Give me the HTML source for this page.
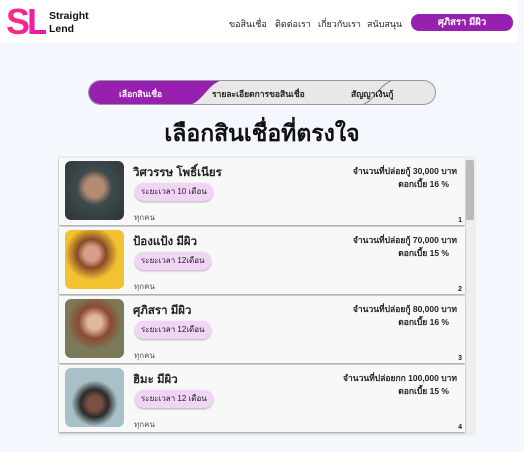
<!DOCTYPE html>
<html><head><meta charset="utf-8"><style>
*{margin:0;padding:0;box-sizing:border-box}
body{width:524px;height:452px;overflow:hidden;background:#f4f7fd;font-family:"Liberation Sans","DejaVu Sans",sans-serif;color:#222;position:relative}
.hdr{position:absolute;left:0;top:0;width:518px;height:43px;background:#fff}
.logo{position:absolute;left:6px;top:2px;font-size:36px;font-weight:bold;letter-spacing:-3px;background:linear-gradient(90deg,#ff2d7a,#e01bb0);-webkit-background-clip:text;color:transparent;line-height:40px}
.brand{position:absolute;left:49px;top:10px;font-size:10.5px;font-weight:bold;line-height:13px;color:#111}
.nav{position:absolute;top:17px;font-size:9px;color:#222;white-space:nowrap}
.btn{position:absolute;left:411px;top:14px;width:102px;height:17px;border-radius:8px;background:#9720b0;color:#fff;font-size:9.5px;text-align:center;line-height:17px;font-weight:bold}
.step{position:absolute;left:88px;top:80px;width:348px;height:25px;border:1px solid #999;border-radius:13px;background:#e8e8e8;overflow:hidden}
.step svg{position:absolute;left:0;top:0}
.st{position:absolute;top:6px;font-size:8.5px;font-weight:bold;white-space:nowrap}
h1{position:absolute;left:0;width:524px;top:116px;text-align:center;font-size:23px;font-weight:bold;color:#111}
.list{position:absolute;left:58px;top:156px;width:418px;height:280px;background:#eee}
.sb{position:absolute;left:466px;top:160px;width:8px;height:60px;background:#bbb;border-radius:2px}
.row{position:absolute;left:1px;width:406px;height:67px;background:#f8f8f8;box-shadow:0 1px 2px rgba(0,0,0,.35)}
.ph{position:absolute;left:6px;top:3px;width:59px;height:59px;border-radius:6px}
.nm{position:absolute;left:74px;top:6px;font-size:11.5px;font-weight:bold;white-space:nowrap}
.tag{position:absolute;left:76px;top:25px;height:18px;padding:0 6px;border-radius:9px;background:#f0d6f4;font-size:8px;line-height:18px;box-shadow:0 1px 2px rgba(0,0,0,.3);white-space:nowrap}
.all{position:absolute;left:75px;top:53px;font-size:8px;color:#555}
.amt{position:absolute;right:8px;top:7px;font-size:8.5px;font-weight:bold;text-align:right;line-height:13px;white-space:nowrap}
.amt span{display:block;padding-right:8px}
.n{position:absolute;right:3px;bottom:1px;font-size:7px;font-weight:bold}
</style></head><body>
<div class="hdr">
<div class="logo">SL</div>
<div class="brand">Straight<br>Lend</div>
<div class="nav" style="left:229px">ขอสินเชื่อ</div>
<div class="nav" style="left:275px">ติดต่อเรา</div>
<div class="nav" style="left:318px">เกี่ยวกับเรา</div>
<div class="nav" style="left:367px">สนับสนุน</div>
<div class="btn">ศุภิสรา มีผิว</div>
</div>
<div class="step">
<svg width="348" height="25"><path d="M0 0H131C118 4 112 24 98 24H0Z" fill="#9720b0"/><path d="M302 0C290 4 284 22 272 24" stroke="#888" fill="none"/></svg>
<div class="st" style="left:30px;color:#fff">เลือกสินเชื่อ</div>
<div class="st" style="left:123px">รายละเอียดการขอสินเชื่อ</div>
<div class="st" style="left:262px">สัญญาเงินกู้</div>
</div>
<h1>เลือกสินเชื่อที่ตรงใจ</h1>
<div class="list">
<div class="row" style="top:2px"><div class="ph" style="background:radial-gradient(circle at 50% 45%,#b58a72 0 22%,#3e4a4c 40%,#2d3436)"></div><div class="nm">วิศวรรษ โพธิ์เนียร</div><div class="tag">ระยะเวลา 10 เดือน</div><div class="all">ทุกคน</div><div class="amt">จำนวนที่ปล่อยกู้ 30,000 บาท<span>ดอกเบี้ย 16 %</span></div><div class="n">1</div></div>
<div class="row" style="top:71px"><div class="ph" style="background:radial-gradient(circle at 45% 40%,#d8a08a 0 15%,#8a4a2a 30%,#f2c230 55%),#f2c230"></div><div class="nm">ป้องแป้ง มีผิว</div><div class="tag">ระยะเวลา 12เดือน</div><div class="all">ทุกคน</div><div class="amt">จำนวนที่ปล่อยกู้ 70,000 บาท<span>ดอกเบี้ย 15 %</span></div><div class="n">2</div></div>
<div class="row" style="top:140px"><div class="ph" style="background:radial-gradient(circle at 50% 40%,#e0b8a0 0 15%,#8a4a30 35%,#7a7a5a 60%)"></div><div class="nm">ศุภิสรา มีผิว</div><div class="tag">ระยะเวลา 12เดือน</div><div class="all">ทุกคน</div><div class="amt">จำนวนที่ปล่อยกู้ 80,000 บาท<span>ดอกเบี้ย 16 %</span></div><div class="n">3</div></div>
<div class="row" style="top:209px"><div class="ph" style="background:radial-gradient(circle at 50% 60%,#7a5040 0 15%,#2a2a2a 30%,#a8c0c8 50%),#b8ccd4"></div><div class="nm">ฮิมะ มีผิว</div><div class="tag">ระยะเวลา 12 เดือน</div><div class="all">ทุกคน</div><div class="amt">จำนวนที่ปล่อยกก 100,000 บาท<span>ดอกเบี้ย 15 %</span></div><div class="n">4</div></div>
</div>
<div class="sb"></div>
</body></html>
